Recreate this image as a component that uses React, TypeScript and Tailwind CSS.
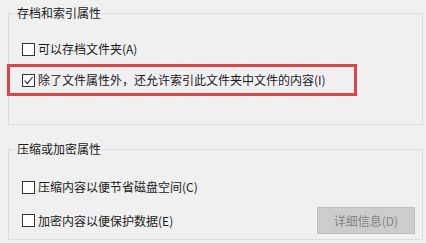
import React from "react";

function Box({ checked }: { checked?: boolean }) {
  return (
    <span className="w-[13px] h-[13px] border border-[#333333] bg-white flex items-center justify-center shrink-0">
      {checked && (
        <svg width="11" height="11" viewBox="0 0 11 11">
          <path d="M1.5 5.5 L4.2 8.6 L9.6 2" stroke="#1f1f1f" strokeWidth="1.1" fill="none" />
        </svg>
      )}
    </span>
  );
}

function Row({ checked, label }: { checked?: boolean; label: string }) {
  return (
    <div className="flex items-center h-[16px] gap-[3px]">
      <Box checked={checked} />
      <span className="leading-[16px]">{label}</span>
    </div>
  );
}

export default function App() {
  return (
    <div className="w-[426px] h-[243px] bg-[#f0f0f0] overflow-hidden font-['Microsoft_YaHei','Noto_Sans_CJK_SC',sans-serif] text-[12px] text-[#1a1a1a] pl-[8px] pr-[3px] pt-[5px]">
      <fieldset className="h-[120px] border border-[#dcdcdc] px-0 pb-0 m-0 min-w-0">
        <legend className="ml-[7px] px-[1px] leading-[16px] text-[12px]">存档和索引属性</legend>
        <div className="pl-[13px] pt-[20px] flex flex-col">
          <Row label="可以存档文件夹(A)" />
          <div className="relative mt-[15px]">
            <Row checked label="除了文件属性外，还允许索引此文件夹中文件的内容(I)" />
            <div className="absolute left-[-15px] top-[-8px] w-[350px] h-[32px] border-[3px] border-[#d9464a]" />
          </div>
        </div>
      </fieldset>
      <fieldset className="mt-[16px] h-[99px] border border-[#dcdcdc] px-0 pb-0 m-0 min-w-0">
        <legend className="ml-[7px] px-[1px] leading-[16px] text-[12px]">压缩或加密属性</legend>
        <div className="pl-[13px] pr-[7px] pt-[22px] flex flex-col">
          <Row label="压缩内容以便节省磁盘空间(C)" />
          <div className="mt-[12px] flex items-center justify-between">
            <Row label="加密内容以便保护数据(E)" />
            <button className="w-[98px] h-[27px] bg-[#cccccc] border border-[#bfbfbf] text-[#838383] text-[12px] leading-none">
              详细信息(D)
            </button>
          </div>
        </div>
      </fieldset>
    </div>
  );
}
